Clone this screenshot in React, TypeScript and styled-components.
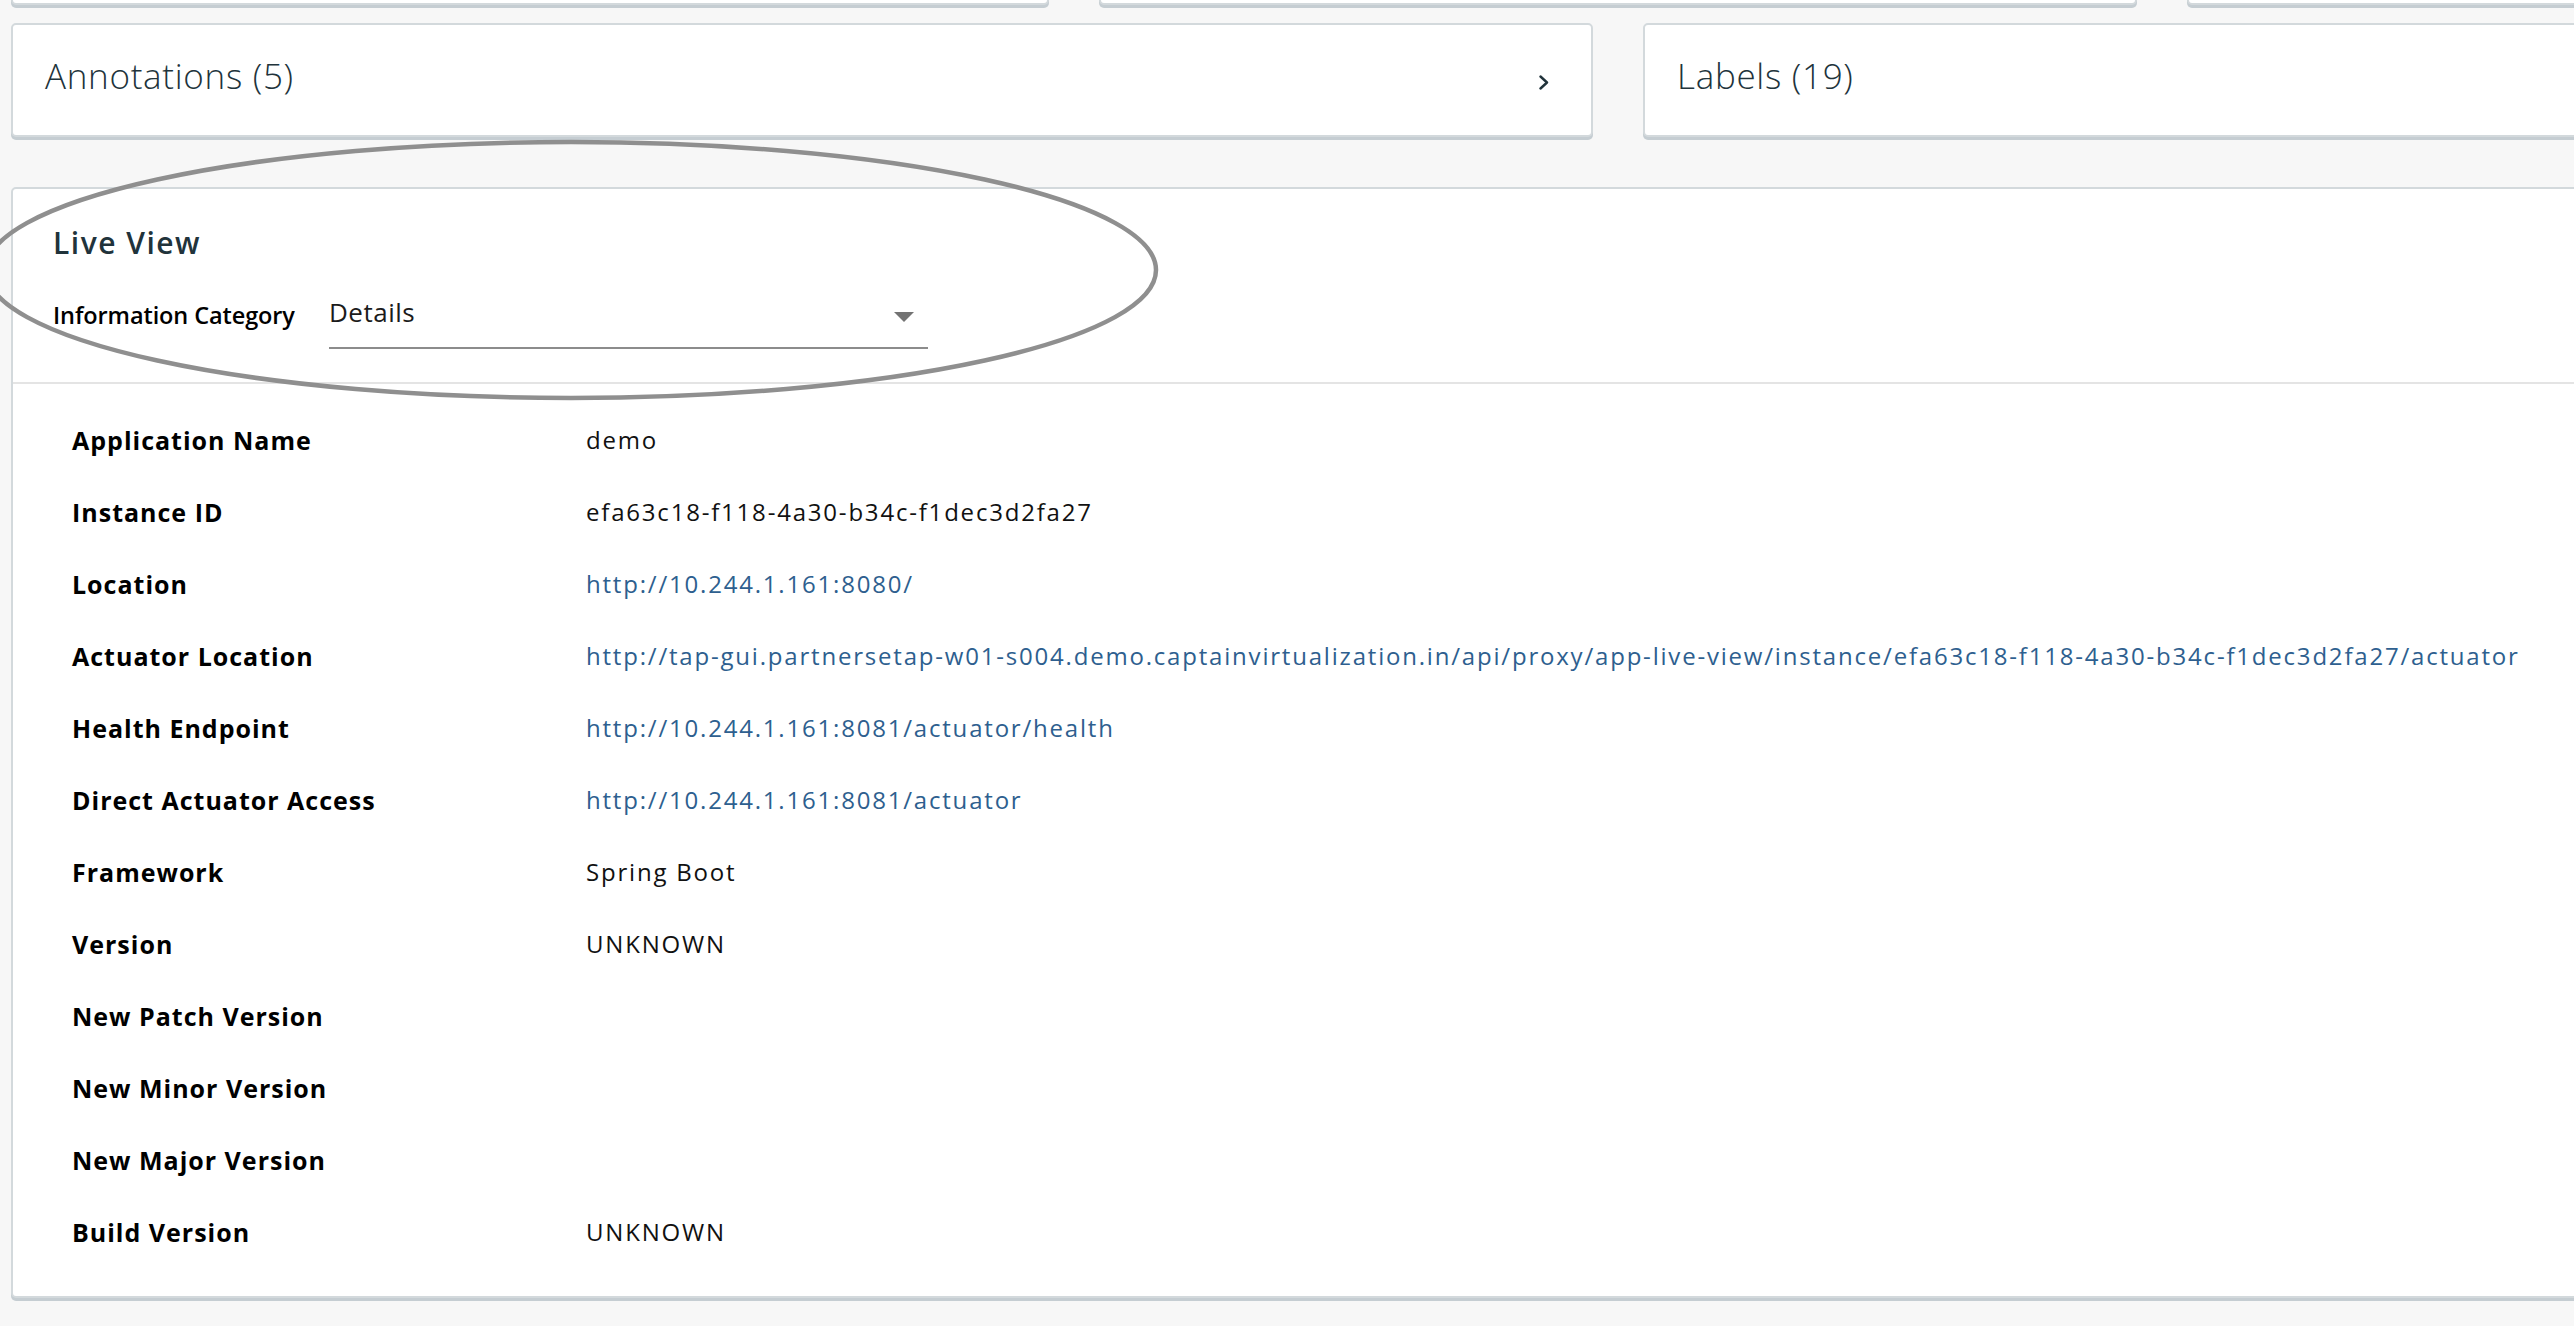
import React from "react";
import styled, { createGlobalStyle } from "styled-components";

const GlobalStyle = createGlobalStyle`
  html, body {
    margin: 0;
    padding: 0;
    background: #f7f7f7;
    overflow: hidden;
  }
  body {
    font-family: "Open Sans", "Liberation Sans", sans-serif;
  }
`;

const Viewport = styled.div`
  position: relative;
  width: 2574px;
  height: 1326px;
  overflow: hidden;
  background: #f7f7f7;
`;

const Page = styled.div`
  width: 3214px;
  margin-top: -95px;
  padding-left: 11px;
  display: flex;
  flex-direction: column;
`;

const Card = styled.div`
  box-sizing: border-box;
  background: #ffffff;
  border: 2px solid #d3d9dc;
  border-radius: 5px;
  box-shadow: 0 3px 0 0 #c5cdd2;
`;

const TopRow = styled.div`
  display: grid;
  grid-template-columns: repeat(3, 1fr);
  column-gap: 50px;
`;

const StubCard = styled(Card)`
  height: 100px;
`;

const MetaRow = styled.div`
  display: grid;
  grid-template-columns: 1fr 1fr;
  column-gap: 50px;
  margin-top: 18px;
`;

const MetaCard = styled(Card)`
  height: 114px;
  display: flex;
  align-items: center;
  padding: 0 33px 9px 32px;
`;

const MetaTitle = styled.div`
  flex: 1;
  font-size: 35px;
  line-height: 1;
  font-weight: 300;
  letter-spacing: 0.7px;
  color: #21333b;
`;

const Chevron = styled.svg`
  flex-shrink: 0;
  margin: 13px 9px 0 0;
`;

const LiveCard = styled(Card)`
  margin-top: 50px;
`;

const LiveHeader = styled.div`
  padding: 39px 40px 33px 40px;
  border-bottom: 2px solid #e4e4e4;
`;

const LiveTitle = styled.h2`
  margin: 0 0 40px 0;
  font-size: 30px;
  line-height: 1;
  font-weight: 600;
  letter-spacing: 1.5px;
  color: #21333b;
`;

const CategoryRow = styled.div`
  display: flex;
  align-items: flex-start;
`;

const CategoryLabel = styled.label`
  width: 276px;
  flex-shrink: 0;
  margin-top: 6px;
  font-size: 23.5px;
  line-height: 1;
  font-weight: 600;
  letter-spacing: -0.1px;
  color: #000000;
`;

const Select = styled.div`
  box-sizing: border-box;
  width: 599px;
  height: 51px;
  display: flex;
  justify-content: space-between;
  align-items: flex-start;
  padding: 1px 14px 0 0;
  border-bottom: 2px solid #8c8c8c;
`;

const SelectValue = styled.span`
  font-size: 26px;
  line-height: 1;
  letter-spacing: 0.5px;
  color: #1b1b1b;
`;

const Caret = styled.svg`
  margin-top: 13px;
`;

const DetailList = styled.dl`
  margin: 0;
  padding: 20px 59px 28px 59px;
  display: grid;
  grid-template-columns: 514px 1fr;
  grid-auto-rows: 72px;
  align-items: center;
`;

const Term = styled.dt`
  font-size: 25px;
  line-height: 1;
  font-weight: 700;
  letter-spacing: 1px;
  color: #000000;
  white-space: nowrap;
`;

const Desc = styled.dd`
  margin: 0;
  font-size: 24px;
  line-height: 1;
  letter-spacing: 1.8px;
  color: #111111;
  white-space: nowrap;
`;

const Link = styled.a`
  color: #2e5f8f;
  text-decoration: none;
`;

const Overlay = styled.svg`
  position: absolute;
  left: 0;
  top: 0;
  pointer-events: none;
`;

type Detail = { label: string; value?: string; link?: boolean };

const details: Detail[] = [
  { label: "Application Name", value: "demo" },
  { label: "Instance ID", value: "efa63c18-f118-4a30-b34c-f1dec3d2fa27" },
  { label: "Location", value: "http://10.244.1.161:8080/", link: true },
  {
    label: "Actuator Location",
    value:
      "http://tap-gui.partnersetap-w01-s004.demo.captainvirtualization.in/api/proxy/app-live-view/instance/efa63c18-f118-4a30-b34c-f1dec3d2fa27/actuator",
    link: true,
  },
  { label: "Health Endpoint", value: "http://10.244.1.161:8081/actuator/health", link: true },
  { label: "Direct Actuator Access", value: "http://10.244.1.161:8081/actuator", link: true },
  { label: "Framework", value: "Spring Boot" },
  { label: "Version", value: "UNKNOWN" },
  { label: "New Patch Version" },
  { label: "New Minor Version" },
  { label: "New Major Version" },
  { label: "Build Version", value: "UNKNOWN" },
];

export default function App() {
  return (
    <Viewport>
      <GlobalStyle />
      <Page>
        <TopRow>
          <StubCard />
          <StubCard />
          <StubCard />
        </TopRow>
        <MetaRow>
          <MetaCard>
            <MetaTitle>Annotations (5)</MetaTitle>
            <Chevron width="10" height="15" viewBox="0 0 10 15">
              <polyline
                points="1.5,1.5 8,7.5 1.5,13.5"
                fill="none"
                stroke="#21333b"
                strokeWidth="2.4"
                strokeLinecap="round"
                strokeLinejoin="round"
              />
            </Chevron>
          </MetaCard>
          <MetaCard>
            <MetaTitle>Labels (19)</MetaTitle>
          </MetaCard>
        </MetaRow>
        <LiveCard>
          <LiveHeader>
            <LiveTitle>Live View</LiveTitle>
            <CategoryRow>
              <CategoryLabel>Information Category</CategoryLabel>
              <Select>
                <SelectValue>Details</SelectValue>
                <Caret width="20" height="10" viewBox="0 0 20 10">
                  <polygon points="0,0 20,0 10,10" fill="#737373" />
                </Caret>
              </Select>
            </CategoryRow>
          </LiveHeader>
          <DetailList>
            {details.map((d) => (
              <React.Fragment key={d.label}>
                <Term>{d.label}</Term>
                <Desc>
                  {d.value && d.link ? <Link href={d.value}>{d.value}</Link> : d.value}
                </Desc>
              </React.Fragment>
            ))}
          </DetailList>
        </LiveCard>
      </Page>
      <Overlay width="2574" height="1326" viewBox="0 0 2574 1326">
        <ellipse cx="571" cy="270" rx="585" ry="128" fill="none" stroke="#8f8f8f" strokeWidth="4.5" />
      </Overlay>
    </Viewport>
  );
}
